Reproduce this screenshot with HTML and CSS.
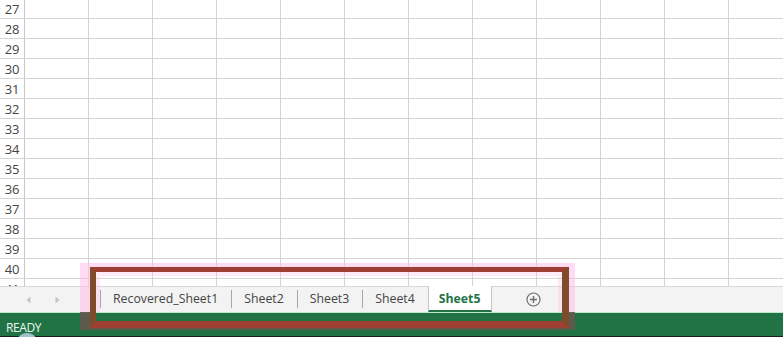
FILE: index.html
```html
<!DOCTYPE html>
<html>
<head>
<meta charset="utf-8">
<link rel="stylesheet" href="styles.css">
</head>
<body>
<div class="app">
  <div class="sheet">
    <div class="rows">
      <div class="row"><div class="rh">27</div><div class="c"></div><div class="c"></div><div class="c"></div><div class="c"></div><div class="c"></div><div class="c"></div><div class="c"></div><div class="c"></div><div class="c"></div><div class="c"></div><div class="c"></div><div class="c"></div></div>
      <div class="row"><div class="rh">28</div><div class="c"></div><div class="c"></div><div class="c"></div><div class="c"></div><div class="c"></div><div class="c"></div><div class="c"></div><div class="c"></div><div class="c"></div><div class="c"></div><div class="c"></div><div class="c"></div></div>
      <div class="row"><div class="rh">29</div><div class="c"></div><div class="c"></div><div class="c"></div><div class="c"></div><div class="c"></div><div class="c"></div><div class="c"></div><div class="c"></div><div class="c"></div><div class="c"></div><div class="c"></div><div class="c"></div></div>
      <div class="row"><div class="rh">30</div><div class="c"></div><div class="c"></div><div class="c"></div><div class="c"></div><div class="c"></div><div class="c"></div><div class="c"></div><div class="c"></div><div class="c"></div><div class="c"></div><div class="c"></div><div class="c"></div></div>
      <div class="row"><div class="rh">31</div><div class="c"></div><div class="c"></div><div class="c"></div><div class="c"></div><div class="c"></div><div class="c"></div><div class="c"></div><div class="c"></div><div class="c"></div><div class="c"></div><div class="c"></div><div class="c"></div></div>
      <div class="row"><div class="rh">32</div><div class="c"></div><div class="c"></div><div class="c"></div><div class="c"></div><div class="c"></div><div class="c"></div><div class="c"></div><div class="c"></div><div class="c"></div><div class="c"></div><div class="c"></div><div class="c"></div></div>
      <div class="row"><div class="rh">33</div><div class="c"></div><div class="c"></div><div class="c"></div><div class="c"></div><div class="c"></div><div class="c"></div><div class="c"></div><div class="c"></div><div class="c"></div><div class="c"></div><div class="c"></div><div class="c"></div></div>
      <div class="row"><div class="rh">34</div><div class="c"></div><div class="c"></div><div class="c"></div><div class="c"></div><div class="c"></div><div class="c"></div><div class="c"></div><div class="c"></div><div class="c"></div><div class="c"></div><div class="c"></div><div class="c"></div></div>
      <div class="row"><div class="rh">35</div><div class="c"></div><div class="c"></div><div class="c"></div><div class="c"></div><div class="c"></div><div class="c"></div><div class="c"></div><div class="c"></div><div class="c"></div><div class="c"></div><div class="c"></div><div class="c"></div></div>
      <div class="row"><div class="rh">36</div><div class="c"></div><div class="c"></div><div class="c"></div><div class="c"></div><div class="c"></div><div class="c"></div><div class="c"></div><div class="c"></div><div class="c"></div><div class="c"></div><div class="c"></div><div class="c"></div></div>
      <div class="row"><div class="rh">37</div><div class="c"></div><div class="c"></div><div class="c"></div><div class="c"></div><div class="c"></div><div class="c"></div><div class="c"></div><div class="c"></div><div class="c"></div><div class="c"></div><div class="c"></div><div class="c"></div></div>
      <div class="row"><div class="rh">38</div><div class="c"></div><div class="c"></div><div class="c"></div><div class="c"></div><div class="c"></div><div class="c"></div><div class="c"></div><div class="c"></div><div class="c"></div><div class="c"></div><div class="c"></div><div class="c"></div></div>
      <div class="row"><div class="rh">39</div><div class="c"></div><div class="c"></div><div class="c"></div><div class="c"></div><div class="c"></div><div class="c"></div><div class="c"></div><div class="c"></div><div class="c"></div><div class="c"></div><div class="c"></div><div class="c"></div></div>
      <div class="row"><div class="rh">40</div><div class="c"></div><div class="c"></div><div class="c"></div><div class="c"></div><div class="c"></div><div class="c"></div><div class="c"></div><div class="c"></div><div class="c"></div><div class="c"></div><div class="c"></div><div class="c"></div></div>
      <div class="row"><div class="rh">41</div><div class="c"></div><div class="c"></div><div class="c"></div><div class="c"></div><div class="c"></div><div class="c"></div><div class="c"></div><div class="c"></div><div class="c"></div><div class="c"></div><div class="c"></div><div class="c"></div></div>
    </div>
  </div>
  <div class="tabbar">
    <div class="nav">
      <svg class="arr" width="5" height="8" viewBox="0 0 5 8"><path d="M4.5 0.5 L0.5 4 L4.5 7.5 Z" fill="#c4c4c4"/></svg>
      <svg class="arr" width="5" height="8" viewBox="0 0 5 8"><path d="M0.5 0.5 L4.5 4 L0.5 7.5 Z" fill="#c4c4c4"/></svg>
    </div>
    <div class="tabs">
      <div class="tab">Recovered_Sheet1</div>
      <div class="tab">Sheet2</div>
      <div class="tab">Sheet3</div>
      <div class="tab">Sheet4</div>
      <div class="tab active">Sheet5</div>
      <div class="add">
        <svg width="15" height="15" viewBox="0 0 15 15"><circle cx="7.5" cy="7.5" r="6.5" fill="none" stroke="#6e6e6e" stroke-width="1.2"/><path d="M7.5 4 V11 M4 7.5 H11" stroke="#6e6e6e" stroke-width="1.4"/></svg>
      </div>
    </div>
  </div>
  <div class="status"><span class="ready">READY</span><span class="blob"></span></div>
  <div class="halo"></div>
  <div class="frame"></div>
</div>
</body>
</html>
```
FILE: styles.css
```css
html, body {
  margin: 0;
  padding: 0;
  background: #ffffff;
}
.app {
  position: relative;
  width: 783px;
  height: 337px;
  overflow: hidden;
  display: flex;
  flex-direction: column;
  font-family: "Open Sans", "Noto Sans", "Liberation Sans", sans-serif;
}
.sheet {
  height: 286px;
  overflow: hidden;
  flex: none;
}
.rows {
  margin-top: -1px;
}
.row {
  display: flex;
  height: 19px;
  border-bottom: 1px solid #d4d4d4;
}
.rh {
  width: 24px;
  flex: none;
  border-right: 1px solid #c8c8c8;
  font-size: 13px;
  color: #444444;
  text-align: center;
  line-height: 20px;
  letter-spacing: -0.3px;
}
.c {
  width: 63px;
  flex: none;
  border-right: 1px solid #d4d4d4;
}
.tabbar {
  flex: none;
  height: 26px;
  box-sizing: border-box;
  background: #f3f3f3;
  border-top: 1px solid #d8d8d8;
  display: flex;
  align-items: stretch;
}
.nav {
  width: 100px;
  flex: none;
  display: flex;
  align-items: center;
  gap: 24px;
  padding-left: 26px;
  box-sizing: border-box;
}
.tabs {
  display: flex;
  align-items: stretch;
  margin-top: -1px;
}
.tab {
  font-size: 12.3px;
  color: #444444;
  padding: 0 13px 0 13px;
  display: flex;
  align-items: center;
  position: relative;
  height: 24px;
}
.tab::before {
  content: "";
  position: absolute;
  left: 0;
  top: 4px;
  height: 18px;
  width: 1px;
  background: #a8a8a8;
}
.tab.active {
  background: #ffffff;
  color: #217346;
  font-weight: 700;
  border-left: 1px solid #c6c6c6;
  border-right: 1px solid #c6c6c6;
  border-bottom: 2px solid #217346;
  padding: 0 10px 0 10px;
}
.tab.active::before {
  display: none;
}
.tab.active + .add {
  margin-left: 34px;
}
.add {
  display: flex;
  align-items: center;
  padding-top: 1px;
}
.status {
  flex: none;
  height: 23px;
  background: #217346;
  border-top: 1px solid #bfe8cc;
  position: relative;
  border-bottom: 2px solid #1c1c1c;
}
.ready {
  font-size: 12px;
  color: #e8f7ee;
  position: relative;
  left: 6px;
  top: 2px;
  display: inline-block;
  letter-spacing: -0.4px;
}
.blob {
  position: absolute;
  left: 16px;
  top: 20px;
  width: 22px;
  height: 22px;
  border-radius: 50%;
  background: #9fc2c8;
}
.halo {
  position: absolute;
  left: 80px;
  top: 263px;
  width: 495px;
  height: 67px;
  box-sizing: border-box;
  border-style: solid;
  border-width: 4px 6px 2px 10px;
  border-image: linear-gradient(to bottom, rgba(255, 185, 232, 0.5) 0px, rgba(255, 185, 232, 0.5) 49px, rgba(96, 88, 78, 0.92) 49px, rgba(96, 88, 78, 0.92) 67px) 1;
}
.frame {
  position: absolute;
  left: 90px;
  top: 267px;
  width: 479px;
  height: 61px;
  box-sizing: border-box;
  border-top: 5px solid #9e3f32;
  border-bottom: 7px solid #9e3f32;
  border-left: 6px solid #7f4c2b;
  border-right: 7px solid #7f4c2b;
}
.frame::before {
  content: "";
  position: absolute;
  left: 0;
  right: 0;
  top: 0;
  height: 40px;
  box-sizing: border-box;
  border: 4px solid rgba(255, 185, 232, 0.3);
  border-bottom: none;
}
```
